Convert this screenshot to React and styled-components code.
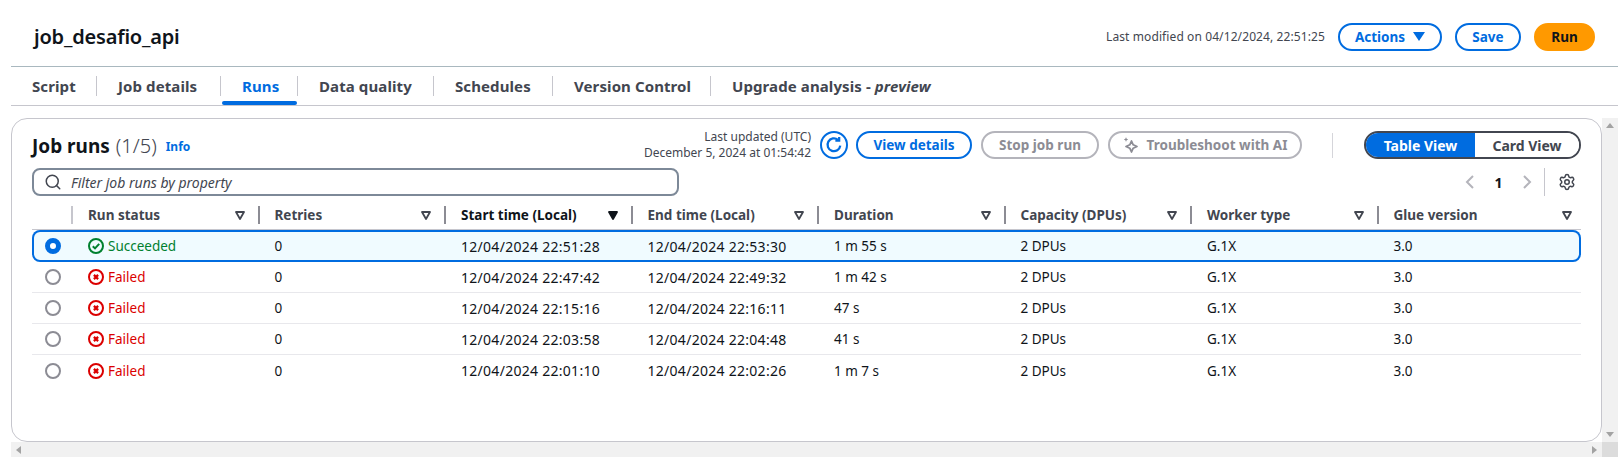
import React from 'react'
import styled, { createGlobalStyle } from 'styled-components'
import { Search, Settings } from 'lucide-react'

const BLUE = '#006ce0'
const INK = '#0f141a'
const GREY = '#424650'
const MUTED = '#b4b4bb'

const GlobalStyle = createGlobalStyle`
  html, body { margin: 0; padding: 0; background: #fff; overflow: hidden; }
  body { font-family: "Noto Sans", "Liberation Sans", sans-serif; font-size: 14px; color: ${INK}; }
  * { box-sizing: border-box; }
  svg { flex: none; }
`

const Page = styled.div`
  width: 1618px;
  height: 457px;
  overflow: hidden;
  padding-left: 11px;
  display: flex;
  flex-direction: column;
`

const Header = styled.header`
  height: 67px;
  flex: none;
  border-bottom: 1px solid #a9b8bf;
  display: flex;
  align-items: center;
  padding: 8px 23px 0 23px;
  gap: 13px;
`

const Title = styled.h1`
  margin: 0 auto 2px 0;
  font-size: 20px;
  font-weight: 600;
  letter-spacing: -0.2px;
`

const Modified = styled.span`
  font-size: 12px;
  letter-spacing: 0.1px;
  color: ${GREY};
  margin-bottom: 2px;
`

const Pill = styled.button`
  height: 28px;
  padding: 0;
  width: ${p => p.$w}px;
  margin-left: ${p => p.$gap || 0}px;
  border-radius: 20px;
  border: 2px solid ${p => (p.$off ? MUTED : p.$run ? '#ff9900' : BLUE)};
  background: ${p => (p.$run ? '#ff9900' : '#fff')};
  color: ${p => (p.$off ? '#8c8c94' : p.$run ? INK : BLUE)};
  font: 700 13.5px "Noto Sans", sans-serif;
  display: inline-flex;
  align-items: center;
  justify-content: center;
  gap: 8px;
  white-space: nowrap;
  flex: none;
`

const Tabs = styled.nav`
  height: 39px;
  flex: none;
  display: flex;
  border-bottom: 1px solid #c6c6cd;
  padding-top: 9px;
`

const Tab = styled.div`
  position: relative;
  height: 20px;
  padding: 0 21px;
  width: ${p => p.$w}px;
  font-size: 15px;
  letter-spacing: 0.1px;
  font-weight: 700;
  line-height: 20px;
  white-space: nowrap;
  color: ${p => (p.$active ? BLUE : GREY)};
  border-right: 1px solid #c6c6cd;
  &:last-child { border-right: 0; }
  &::after {
    content: '';
    display: ${p => (p.$active ? 'block' : 'none')};
    position: absolute;
    left: 1px;
    right: 0;
    top: 25px;
    height: 4px;
    border-radius: 2px;
    background: ${BLUE};
  }
`

const ScrollArea = styled.div`
  margin-top: 12px;
  flex: 1;
  min-height: 0;
  display: grid;
  grid-template-columns: 1fr 16px;
  grid-template-rows: 1fr 15px;
`

const Card = styled.section`
  border: 1px solid #c6c6cd;
  border-radius: 16px;
  padding: 12px 20px 0 20px;
  min-width: 0;
`

const CardTop = styled.div`
  display: flex;
  align-items: center;
  height: 28px;
`

const CardTitle = styled.h2`
  margin: 0;
  font-size: 19px;
  font-weight: 700;
  span { margin-left: 1px; font-size: 20px; font-weight: 300; color: ${GREY}; }
`

const InfoLink = styled.a`
  margin: 3px auto 0 9px;
  font-size: 12px;
  font-weight: 700;
  color: ${BLUE};
`

const Updated = styled.div`
  font-size: 12px;
  line-height: 16px;
  color: ${GREY};
  text-align: right;
  margin-right: 9px;
`

const IconCircle = styled.button`
  width: 28px;
  height: 28px;
  border-radius: 50%;
  border: 2px solid ${BLUE};
  background: #fff;
  color: ${BLUE};
  padding: 0;
  margin-right: 8px;
  display: grid;
  place-items: center;
`

const Divider = styled.div`
  width: 1px;
  height: 25px;
  background: #d5d5da;
  margin: 0 31px 0 30px;
`

const Segment = styled.div`
  display: flex;
  width: 217px;
  height: 28px;
  border: 2px solid ${GREY};
  border-radius: 20px;
  overflow: hidden;
`

const SegmentItem = styled.div`
  flex: ${p => (p.$on ? '0 0 109px' : 1)};
  background: ${p => (p.$on ? BLUE : '#fff')};
  color: ${p => (p.$on ? '#fff' : GREY)};
  font-size: 14px;
  font-weight: 700;
  display: grid;
  place-items: center;
`

const FilterRow = styled.div`
  display: flex;
  align-items: center;
  height: 28px;
  margin-top: 9px;
`

const Filter = styled.div`
  width: 647px;
  height: 28px;
  border: 2px solid #7d8998;
  border-radius: 8px;
  display: flex;
  align-items: center;
  gap: 9px;
  padding-left: 10px;
  font-size: 14px;
  font-style: italic;
  color: ${GREY};
  margin-right: auto;
`

const Pager = styled.div`
  display: flex;
  align-items: center;
  font-size: 14px;
  font-weight: 700;
  color: ${INK};
  gap: 18.5px;
`

const PagerRule = styled.div`
  width: 1px;
  height: 28px;
  background: #c6c6cd;
  margin: 0 13px 0 11px;
`

const GearSlot = styled.div`
  display: flex;
  margin-right: 5px;
  color: ${GREY};
`

const COLUMNS = '39px repeat(7, 186.5px) 1fr'

const HeadRow = styled.div`
  display: grid;
  grid-template-columns: ${COLUMNS};
  height: 34px;
  padding-top: 10px;
  border-bottom: 1px solid #c6c6cd;
`

const HeadCell = styled.div`
  height: 18px;
  border-left: ${p => (p.$blank ? 0 : `2px solid ${p.$light ? '#c6c6cd' : '#8c8c94'}`)};
  padding: 0 ${p => (p.$end ? 9 : 13)}px 0 15px;
  display: flex;
  align-items: center;
  justify-content: space-between;
  font-size: 13.5px;
  font-weight: 700;
  color: ${p => (p.$sorted ? INK : GREY)};
  white-space: nowrap;
`

const Row = styled.div`
  display: grid;
  grid-template-columns: ${COLUMNS};
  align-items: center;
  height: ${p => (p.$selected ? 32 : 31)}px;
  background: ${p => (p.$selected ? '#f0fbff' : '#fff')};
  border-radius: ${p => (p.$selected ? '8px' : 0)};
  box-shadow: ${p => (p.$selected ? `inset 0 0 0 2px ${BLUE}` : 'none')};
  border-bottom: ${p => (p.$selected || p.$last ? 0 : '1px solid #e8e8ec')};
`

const Cell = styled.div`
  padding-left: 17px;
  letter-spacing: ${p => (p.$date ? '0.28px' : 0)};
  font-size: ${p => (p.$date ? 14 : 13.5)}px;
  color: ${INK};
  white-space: nowrap;
`

const Radio = styled.div`
  justify-self: center;
  margin-left: 3px;
  width: 16px;
  height: 16px;
  border-radius: 50%;
  border: ${p => (p.$on ? `5px solid ${BLUE}` : '2px solid #8c8c94')};
  background: #fff;
`

const Status = styled(Cell)`
  display: flex;
  align-items: center;
  gap: 4px;
  color: ${p => (p.$ok ? '#00802f' : '#db0000')};
`

const VBar = styled.div`
  background: #f1f1f1;
  display: flex;
  flex-direction: column;
  justify-content: space-between;
  align-items: center;
  padding: 5px 0;
`

const HBar = styled.div`
  background: #f1f1f1;
  display: flex;
  justify-content: space-between;
  align-items: center;
  padding: 0 5px;
`

const Corner = styled.div`
  background: #dcdcdc;
`

const Arrow = styled.i`
  width: 0;
  height: 0;
  border: 4px solid transparent;
  ${p => p.$dir === 'up' && 'border-top: 0; border-bottom: 5px solid #a3a3a3;'}
  ${p => p.$dir === 'down' && 'border-bottom: 0; border-top: 5px solid #a3a3a3;'}
  ${p => p.$dir === 'left' && 'border-left: 0; border-right: 5px solid #a3a3a3;'}
  ${p => p.$dir === 'right' && 'border-right: 0; border-left: 5px solid #a3a3a3;'}
`

const SortIcon = ({ filled }) => (
  <svg width="10" height="9" viewBox="0 0 10 9">
    <path
      d="M1 1h8L5 8z"
      fill={filled ? INK : 'none'}
      stroke={filled ? INK : GREY}
      strokeWidth="1.8"
      strokeLinejoin="round"
    />
  </svg>
)

const CheckIcon = () => (
  <svg width="16" height="16" viewBox="0 0 16 16" fill="none" stroke="#00802f" strokeWidth="2">
    <circle cx="8" cy="8" r="7" />
    <path d="M4.8 8.2l2.2 2.2 4.2-4.6" />
  </svg>
)

const FailIcon = () => (
  <svg width="16" height="16" viewBox="0 0 16 16" fill="none" stroke="#db0000" strokeWidth="2">
    <circle cx="8" cy="8" r="7" />
    <path d="M5.9 5.9l4.2 4.2M10.1 5.9l-4.2 4.2" strokeWidth="2.2" />
  </svg>
)

const RefreshIcon = () => (
  <svg width="18" height="18" viewBox="0 0 16 16" fill="none" stroke={BLUE} strokeWidth="2">
    <path d="M13.6 8.6A5.7 5.7 0 1 1 11.6 3.4" />
    <path d="M12.6 0.8v3.4H9.2" />
  </svg>
)

const SparkleIcon = () => (
  <svg width="16" height="17" viewBox="0 0 16 17" fill="none" stroke="#8c8c94" strokeWidth="1.8" strokeLinejoin="round">
    <path d="M8.5 4l1.7 3.8 3.8 1.7-3.8 1.7-1.7 3.8-1.7-3.8L3 9.5l3.8-1.7z" />
    <path d="M3 .8v3.4M1.3 2.5h3.4" strokeWidth="1.2" />
  </svg>
)

const PagerChevron = ({ flip }) => (
  <svg width="12" height="16" viewBox="0 0 12 16" fill="none" stroke={MUTED} strokeWidth="2">
    <path d={flip ? 'M3 2l6 6-6 6' : 'M9 2L3 8l6 6'} />
  </svg>
)

const tabs = [
  { label: 'Script', w: 86 },
  { label: 'Job details', w: 124 },
  { label: 'Runs', w: 77, active: true },
  { label: 'Data quality', w: 136 },
  { label: 'Schedules', w: 119 },
  { label: 'Version Control', w: 158 },
  { label: 'Upgrade analysis - ', em: 'preview', w: 300 },
]

const columns = ['Run status', 'Retries', 'Start time (Local)', 'End time (Local)', 'Duration', 'Capacity (DPUs)', 'Worker type', 'Glue version']

const runs = [
  { ok: true, start: '12/04/2024 22:51:28', end: '12/04/2024 22:53:30', duration: '1 m 55 s' },
  { start: '12/04/2024 22:47:42', end: '12/04/2024 22:49:32', duration: '1 m 42 s' },
  { start: '12/04/2024 22:15:16', end: '12/04/2024 22:16:11', duration: '47 s' },
  { start: '12/04/2024 22:03:58', end: '12/04/2024 22:04:48', duration: '41 s' },
  { start: '12/04/2024 22:01:10', end: '12/04/2024 22:02:26', duration: '1 m 7 s' },
]

export default function App() {
  return (
    <Page>
      <GlobalStyle />
      <Header>
        <Title>job_desafio_api</Title>
        <Modified>Last modified on 04/12/2024, 22:51:25</Modified>
        <Pill $w={104}>
          Actions
          <svg width="12" height="10" viewBox="0 0 12 10"><path d="M0 0h12L6 9z" fill={BLUE} /></svg>
        </Pill>
        <Pill $w={66}>Save</Pill>
        <Pill $w={61} $run>Run</Pill>
      </Header>
      <Tabs>
        {tabs.map(t => (
          <Tab key={t.label} $w={t.w} $active={t.active}>
            {t.label}{t.em && <em>{t.em}</em>}
          </Tab>
        ))}
      </Tabs>
      <ScrollArea>
        <Card>
          <CardTop>
            <CardTitle>Job runs <span>(1/5)</span></CardTitle>
            <InfoLink>Info</InfoLink>
            <Updated>Last updated (UTC)<br />December 5, 2024 at 01:54:42</Updated>
            <IconCircle><RefreshIcon /></IconCircle>
            <Pill $w={116}>View details</Pill>
            <Pill $w={118} $gap={9} $off>Stop job run</Pill>
            <Pill $w={194} $gap={9} $off><SparkleIcon />Troubleshoot with AI</Pill>
            <Divider />
            <Segment>
              <SegmentItem $on>Table View</SegmentItem>
              <SegmentItem>Card View</SegmentItem>
            </Segment>
          </CardTop>
          <FilterRow>
            <Filter><Search size={18} color={GREY} strokeWidth={2} />Filter job runs by property</Filter>
            <Pager>
              <PagerChevron />
              <span>1</span>
              <PagerChevron flip />
            </Pager>
            <PagerRule />
            <GearSlot><Settings size={18} strokeWidth={2} /></GearSlot>
          </FilterRow>
          <div>
            <HeadRow>
              <HeadCell $blank />
              {columns.map((c, i) => (
                <HeadCell key={c} $light={i === 0} $sorted={c.startsWith('Start')} $end={i === columns.length - 1}>
                  {c}
                  <SortIcon filled={c.startsWith('Start')} />
                </HeadCell>
              ))}
            </HeadRow>
            {runs.map((r, i) => (
              <Row key={r.start} $selected={r.ok} $last={i === runs.length - 1}>
                <Radio $on={r.ok} />
                <Status $ok={r.ok}>
                  {r.ok ? <CheckIcon /> : <FailIcon />}
                  {r.ok ? 'Succeeded' : 'Failed'}
                </Status>
                <Cell>0</Cell>
                <Cell $date>{r.start}</Cell>
                <Cell $date>{r.end}</Cell>
                <Cell>{r.duration}</Cell>
                <Cell>2 DPUs</Cell>
                <Cell>G.1X</Cell>
                <Cell>3.0</Cell>
              </Row>
            ))}
          </div>
        </Card>
        <VBar><Arrow $dir="up" /><Arrow $dir="down" /></VBar>
        <HBar><Arrow $dir="left" /><Arrow $dir="right" /></HBar>
        <Corner />
      </ScrollArea>
    </Page>
  )
}
